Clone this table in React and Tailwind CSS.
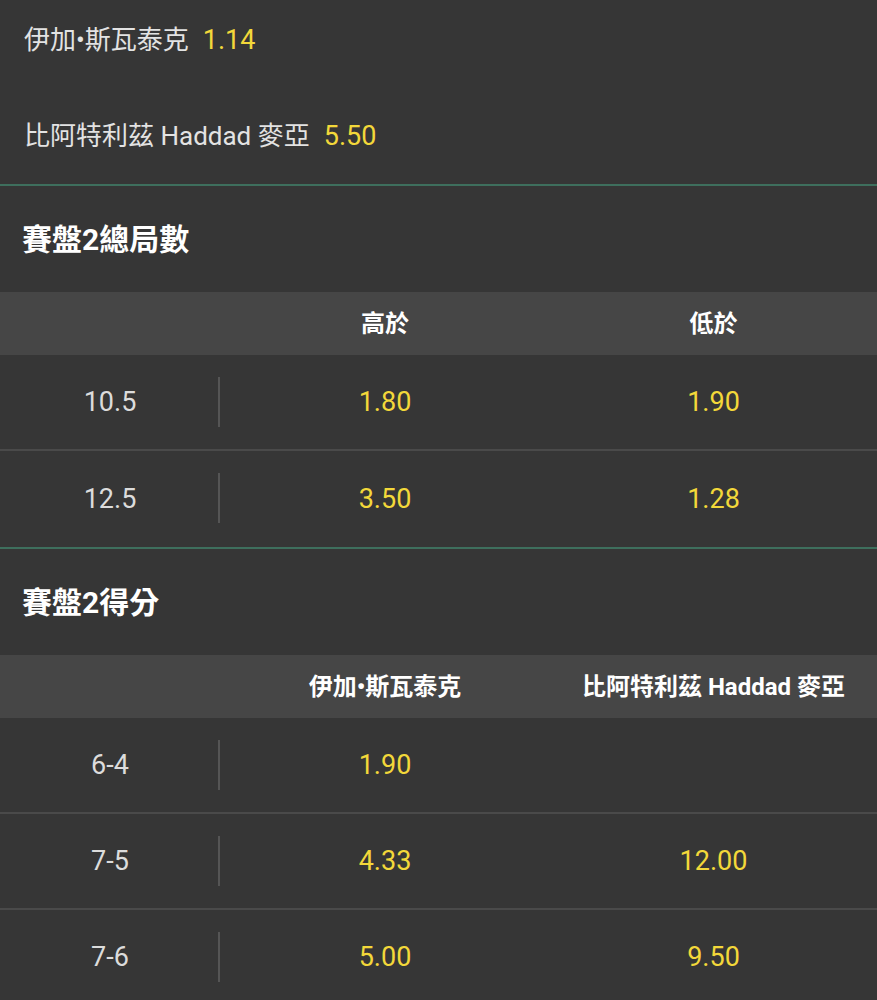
const font = { fontFamily: 'Roboto, "Noto Sans CJK TC", sans-serif' }

const Outright = ({ name, odds }) => (
  <div className="h-[96px] flex items-center px-6 text-[26px]">
    <span className="text-[#e3e3e3]">{name}</span>
    <span className="ml-[14px] text-[#f3d83a] text-[27px]">{odds}</span>
  </div>
)

const Header = ({ left, right }) => (
  <div className="grid grid-cols-[220px_330px_1fr] h-[63px] bg-[#464646] items-center text-[24px] font-bold text-white">
    <div />
    <div className="text-center">{left}</div>
    <div className="text-center">{right}</div>
  </div>
)

const Row = ({ label, a, b, last }) => (
  <div
    className={
      "grid grid-cols-[220px_330px_1fr] h-[96px] items-center text-[27px] " +
      (last ? "" : "border-b-2 border-[#4a4a4a]")
    }
  >
    <div className="relative h-full flex items-center justify-center text-[#dcdcdc]">
      {label}
      <div className="absolute right-0 top-[22px] w-[2px] h-[50px] bg-[#555]" />
    </div>
    <div className="text-center text-[#f3d83a]">{a}</div>
    <div className="text-center text-[#f3d83a]">{b}</div>
  </div>
)

const Heading = ({ children }) => (
  <div className="h-[106px] flex items-center px-[22px] text-[30px] font-bold text-white">
    {children}
  </div>
)

export default function App() {
  return (
    <div className="w-[877px] h-[1000px] overflow-hidden bg-[#363636]" style={font}>
      <div className="-mt-[8px]">
        <Outright name="伊加•斯瓦泰克" odds="1.14" />
        <Outright name="比阿特利茲 Haddad 麥亞" odds="5.50" />
      </div>
      <div className="h-[2px] bg-[#3e6f5d]" />
      <Heading>賽盤2總局數</Heading>
      <Header left="高於" right="低於" />
      <Row label="10.5" a="1.80" b="1.90" />
      <Row label="12.5" a="3.50" b="1.28" last />
      <div className="h-[2px] bg-[#3e6f5d]" />
      <Heading>賽盤2得分</Heading>
      <Header left="伊加•斯瓦泰克" right="比阿特利茲 Haddad 麥亞" />
      <Row label="6-4" a="1.90" b="" />
      <Row label="7-5" a="4.33" b="12.00" />
      <Row label="7-6" a="5.00" b="9.50" />
    </div>
  )
}
